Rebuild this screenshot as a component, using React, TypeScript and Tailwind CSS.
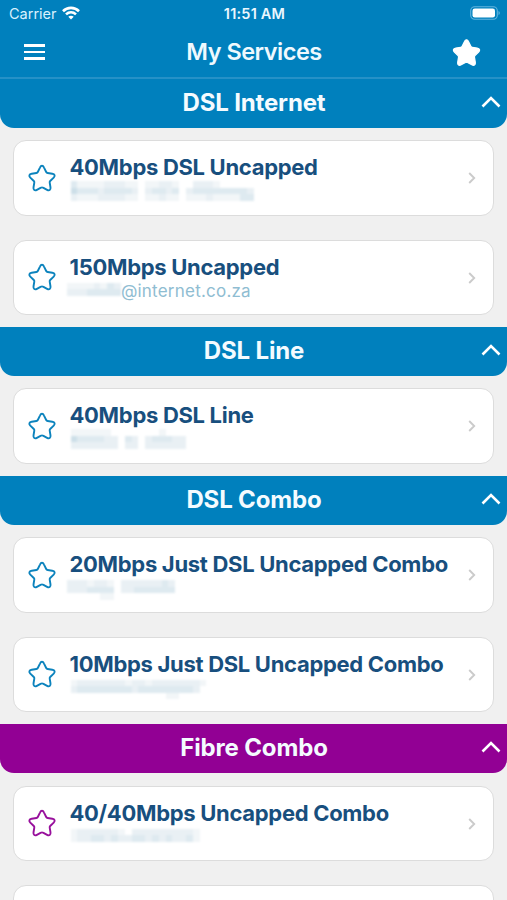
import React from 'react';
import clsx from 'clsx';

interface Mosaic {
  x: number;
  y: number;
  rows: string[];
}

interface Service {
  name?: string;
  detail?: string;
  mosaic?: Mosaic;
}

interface Group {
  title: string;
  fibre?: boolean;
  services: Service[];
}

// Each digit is the strength of one cell in the masked customer name, 0 = empty
const groups: Group[] = [
  {
    title: 'DSL Internet',
    services: [
      { name: '40Mbps DSL Uncapped', mosaic: { x: 1, y: 0, rows: ['311112221101122100222100000', '433323333202332302333333332', '211122221101121101112111133'] } },
      { name: '150Mbps Uncapped', detail: '@internet.co.za', mosaic: { x: -3, y: 2, rows: ['11112132', '22233333'] } },
    ],
  },
  {
    title: 'DSL Line',
    services: [{ name: '40Mbps DSL Line', mosaic: { x: 1, y: 0, rows: ['111111000000010000', '433332203202333220', '222222202202222220'] } }],
  },
  {
    title: 'DSL Combo',
    services: [
      { name: '20Mbps Just DSL Uncapped Combo', mosaic: { x: -3, y: 2, rows: ['2221221022222232', '2223333022333333', '0000011000000000'] } },
      { name: '10Mbps Just DSL Uncapped Combo', mosaic: { x: 1, y: 2, rows: ['12222222122122222221', '23333333323333333320', '00000000000000110000'] } },
    ],
  },
  {
    title: 'Fibre Combo',
    fibre: true,
    services: [
      { name: '40/40Mbps Uncapped Combo', mosaic: { x: 1, y: 2, rows: ['1222222102222222221', '1223323223323232231'] } },
      {},
    ],
  },
];

const shades: Record<string, string> = {
  '0': 'bg-transparent',
  '1': 'bg-[#f2f6f8]',
  '2': 'bg-[#e9f0f4]',
  '3': 'bg-[#deeaf0]',
  '4': 'bg-[#cddfe8]',
};

const STAR =
  'M14 1.8c.9 0 1.5.6 1.9 1.5l2.300 4.700c.3.600.700.900 1.400 1l4.700.700c1.300.200 2.100.800 2.300 1.600.2.800-.1 1.500-.9 2.300l-3.500 3.400c-.5.500-.6.900-.5 1.600l.8 4.900c.2 1.300-.1 2.100-.8 2.600-.7.500-1.500.400-2.600-.2l-4.100-2.200c-.7-.400-1.300-.400-2 0l-4.100 2.200c-1.100.600-1.900.700-2.600.2-.7-.5-1-1.300-.8-2.600l.8-4.900c.1-.7 0-1.100-.5-1.600l-3.500-3.400c-.8-.8-1.100-1.500-.9-2.300.2-.8 1-1.400 2.300-1.600l4.700-.7c.7-.1 1.100-.4 1.400-1l2.300-4.700c.4-.9 1-1.500 1.900-1.500z';

const Star: React.FC<{ filled?: boolean; className?: string }> = ({ filled, className }) => (
  <svg viewBox="0 0 28 28" className={className} fill={filled ? 'currentColor' : 'none'} stroke="currentColor" strokeWidth={filled ? 1.2 : 1.9} strokeLinejoin="round">
    <path d={STAR} />
  </svg>
);

const MaskedText: React.FC<{ mosaic: Mosaic }> = ({ mosaic }) => (
  <div className="flex flex-col blur-[1px]" style={{ marginLeft: mosaic.x, marginTop: mosaic.y }}>
    {mosaic.rows.map((row, i) => (
      <div key={i} className="flex">
        {row.split('').map((cell, j) => (
          <span key={j} className={clsx('h-[6.5px] w-[6.8px]', shades[cell])} />
        ))}
      </div>
    ))}
  </div>
);

const StatusBar: React.FC = () => (
  <div className="grid h-[27px] grid-cols-3 items-center pr-[7px] pl-[9px]">
    <div className="flex items-center gap-[6px] text-[14.5px] text-[#d9f1fd]">
      Carrier
      <svg viewBox="0 0 18 14" className="-mt-[2px] -ml-px h-[14px] w-[18px]" fill="none" stroke="white" strokeWidth="2.6">
        <path d="M1 5.200C5.500.800 12.500.800 17 5.200" />
        <path d="M4 8.400c2.900-2.700 7.100-2.700 10 0" />
        <path d="M9 13.600l-2.700-2.900c1.500-1.300 3.900-1.300 5.400 0z" fill="white" stroke="none" />
      </svg>
    </div>
    <div className="pt-px text-center text-[14.5px] font-semibold tracking-[0.2px] text-[#eaf7fe]">11:51 AM</div>
    <svg viewBox="0 0 30 14" className="-mt-px h-[14px] w-[30px] justify-self-end">
      <rect x="0.7" y="0.7" width="26.6" height="12.6" rx="4" fill="none" stroke="#62b4de" strokeWidth="1.1" />
      <rect x="2.5" y="2.5" width="22.5" height="9" rx="2.3" fill="white" />
      <path d="M28.500 5v4q1.300-.600 1.300-2t-1.300-2z" fill="#62b4de" />
    </svg>
  </div>
);

const NavBar: React.FC = () => (
  <div className="flex h-[52px] items-center justify-between border-b-2 border-[#2591c7] pr-[26px] pl-6">
    <div className="flex w-7 flex-col gap-[3.5px]">
      <span className="h-[2.8px] w-[21px] bg-white" />
      <span className="h-[2.8px] w-[21px] bg-white" />
      <span className="h-[2.8px] w-[21px] bg-white" />
    </div>
    <h1 className="ml-[4px] text-[23.5px] font-semibold tracking-[-0.5px] text-[#eff9fe]">My Services</h1>
    <Star filled className="size-[29px] text-white" />
  </div>
);

const ServiceCard: React.FC<{ service: Service; fibre?: boolean }> = ({ service, fibre }) => (
  <div className="mx-[13px] my-[12.1px] flex h-[75.5px] shrink-0 rounded-[13px] border-[1.5px] border-[#dcdcdc] bg-white pr-[17px] pl-[13.5px]">
    {service.name && (
      <>
        <Star className={clsx('mt-[22.5px] size-[28px] shrink-0', fibre ? 'text-[#98109c]' : 'text-[#0c83bd]')} />
        <div className="mt-[12px] ml-[14px] grow">
          <h3 className="h-[28px] text-[22px] leading-[28px] font-[650] tracking-[-0.3px] whitespace-nowrap text-[#184f7e]">{service.name}</h3>
          <div className="flex">
            {service.mosaic && <MaskedText mosaic={service.mosaic} />}
            {service.detail && <span className="-mt-[1px] text-[17px] leading-[22px] tracking-[0.22px] text-[#8fbdd2]">{service.detail}</span>}
          </div>
        </div>
        <svg viewBox="0 0 8 12" className="mt-[31px] h-[12px] w-[8px] shrink-0" fill="none" stroke="#cbcbcb" strokeWidth="1.9">
          <path d="M1.200 1l5 5-5 5" />
        </svg>
      </>
    )}
  </div>
);

const ServiceGroup: React.FC<{ group: Group }> = ({ group }) => (
  <section className="shrink-0">
    <div className={clsx('relative flex h-[49px] items-center justify-center rounded-b-[14px]', group.fibre ? 'bg-[#920094]' : 'bg-[#0080bd]')}>
      <h2 className="-mt-px ml-px text-[24px] font-[650] tracking-[-0.15px] text-[#f4fbff]">{group.title}</h2>
      <svg viewBox="0 0 20 12" className="absolute top-[17px] right-[6px] h-[12px] w-[20px]" fill="none" stroke="white" strokeWidth="2.6">
        <path d="M1.500 10.500L10 2l8.500 8.500" />
      </svg>
    </div>
    <div className="flex flex-col">
      {group.services.map((service, i) => (
        <ServiceCard key={i} service={service} fibre={group.fibre} />
      ))}
    </div>
  </section>
);

export default function App() {
  return (
    <div className="flex h-[900px] w-[507px] flex-col overflow-hidden bg-[#f0f0f0] font-['Inter',sans-serif]">
      <header className="shrink-0 bg-[#0080bd]">
        <StatusBar />
        <NavBar />
      </header>
      {groups.map((group) => (
        <ServiceGroup key={group.title} group={group} />
      ))}
    </div>
  );
}
